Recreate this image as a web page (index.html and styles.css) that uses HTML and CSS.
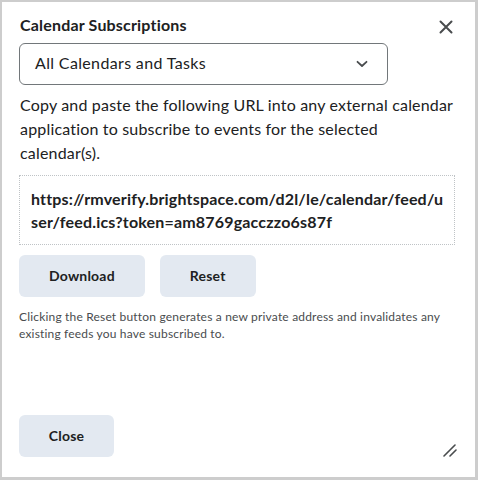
FILE: index.html
```html
<!DOCTYPE html>
<html>
<head>
<meta charset="utf-8">
<link rel="stylesheet" href="styles.css">
</head>
<body>
<div class="dialog">
  <div class="header">
    <h1 class="title">Calendar Subscriptions</h1>
    <button class="close-x" aria-label="Close">
      <svg width="14" height="14" viewBox="0 0 14 14"><path d="M1.5 1.5 L12.5 12.5 M12.5 1.5 L1.5 12.5" stroke="#494c4e" stroke-width="2" stroke-linecap="round" fill="none"/></svg>
    </button>
  </div>
  <div class="select">
    <span class="select-label">All Calendars and Tasks</span>
    <svg class="chev" width="12" height="8" viewBox="0 0 12 8"><path d="M1.5 1.8 L6 6 L10.5 1.8" stroke="#494c4e" stroke-width="1.8" stroke-linecap="round" stroke-linejoin="round" fill="none"/></svg>
  </div>
  <p class="desc">Copy and paste the following URL into any external calendar application to subscribe to events for the selected calendar(s).</p>
  <div class="url">https://rmverify.brightspace.com/d2l/le/calendar/feed/user/feed.ics?token=am8769gacczzo6s87f</div>
  <div class="actions">
    <button class="btn">Download</button>
    <button class="btn">Reset</button>
  </div>
  <p class="note">Clicking the Reset button generates a new private address and invalidates any existing feeds you have subscribed to.</p>
  <div class="footer">
    <button class="btn">Close</button>
  </div>
  <svg class="grip" width="14" height="14" viewBox="0 0 14 14"><path d="M1 13 L12 2 M7 13 L13 7" stroke="#494c4e" stroke-width="1.6" stroke-linecap="round" fill="none"/></svg>
</div>
</body>
</html>
```

FILE: styles.css
```css
html, body {
  margin: 0;
  padding: 0;
  background: #ffffff;
}
body {
  font-family: Lato, "Noto Sans", sans-serif;
  color: #202122;
  letter-spacing: 0.18px;
}
.dialog {
  position: relative;
  box-sizing: border-box;
  width: 478px;
  height: 480px;
  border-style: solid;
  border-color: #cdcdcd;
  border-width: 2px 3px 3px 2px;
  padding: 13px 20px 20px 17px;
  display: flex;
  flex-direction: column;
  background: #fff;
}
.header {
  display: flex;
  align-items: center;
  justify-content: space-between;
  padding-left: 1px;
}
.title {
  margin: 0;
  font-size: 16px;
  line-height: 20px;
  font-weight: 700;
  color: #202122;
}
.close-x {
  border: 0;
  background: none;
  padding: 0;
  margin: 3px 2px 0 0;
  width: 14px;
  height: 14px;
  display: flex;
}
.select {
  margin-top: 8px;
  box-sizing: border-box;
  width: 369px;
  height: 42px;
  border: 1px solid #72777a;
  border-radius: 6px;
  display: flex;
  align-items: center;
  justify-content: space-between;
  padding: 0 19px 0 15px;
  font-size: 16px;
  letter-spacing: 0.35px;
  color: #202122;
}
.select-label {
  padding-bottom: 4px;
}
.chev {
  margin-top: 0;
}
.desc {
  margin: 8px 0 0 1px;
  font-size: 16px;
  line-height: 24px;
  color: #202122;
}
.url {
  margin-top: 10px;
  border: 1px dotted #bfc3c6;
  padding: 11px 6px 11px 11px;
  font-size: 16px;
  line-height: 23px;
  font-weight: 700;
  word-break: break-all;
  color: #202122;
}
.actions {
  margin-top: 10px;
  display: flex;
  gap: 15px;
}
.btn {
  box-sizing: border-box;
  height: 42px;
  padding: 0 30px 2px;
  border: 0;
  border-radius: 6px;
  background: #e3e9f1;
  font-family: Lato, "Noto Sans", sans-serif;
  font-size: 14px;
  font-weight: 700;
  letter-spacing: 0.2px;
  color: #202122;
}
.note {
  margin: 11px 0 0 0;
  font-size: 12px;
  line-height: 17px;
  color: #494c4e;
}
.footer {
  margin-top: auto;
  display: flex;
}
.footer .btn {
  width: 95px;
  padding: 0 0 2px;
}
.grip {
  position: absolute;
  right: 18px;
  bottom: 20px;
}
```
